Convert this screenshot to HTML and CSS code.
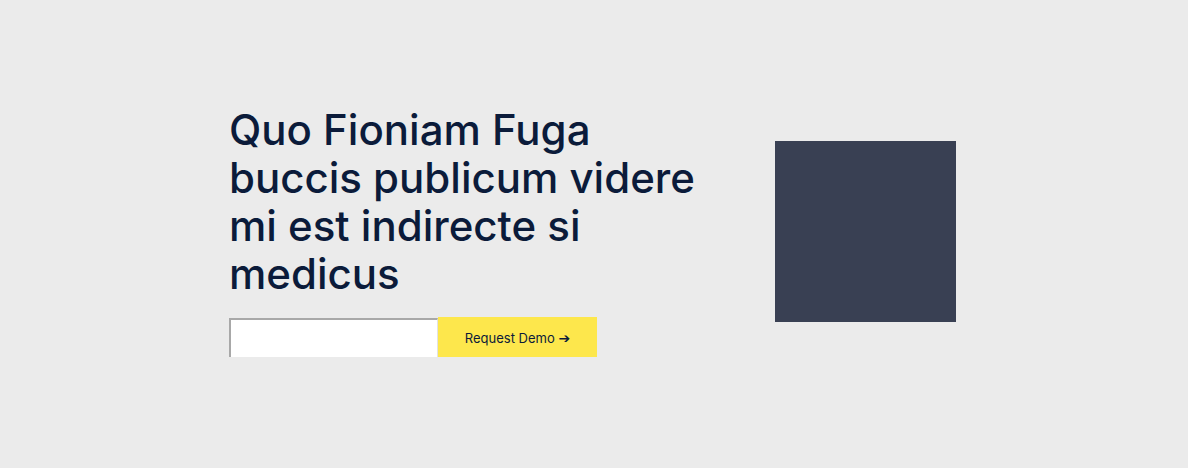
FILE: index.html
```html
<!DOCTYPE html>
<html>
<head>
<meta charset="utf-8">
<link rel="stylesheet" href="styles.css">
</head>
<body>
<section class="hero">
  <div class="hero-inner">
    <div class="hero-text">
      <h1 class="title">Quo Fioniam Fuga buccis publicum videre mi est indirecte si medicus</h1>
      <form class="demo-form">
        <input class="demo-input" type="text">
        <button class="demo-btn" type="button">Request Demo <span class="arrow">➔</span></button>
      </form>
    </div>
    <div class="hero-image"></div>
  </div>
</section>
</body>
</html>
```

FILE: styles.css
```css
html, body {
  margin: 0;
  padding: 0;
  background: #ebebeb;
}
.hero {
  height: 468px;
  display: flex;
  align-items: center;
  justify-content: center;
  padding-right: 3px;
  padding-bottom: 6px;
  box-sizing: border-box;
}
.hero-inner {
  width: 727px;
  display: flex;
  align-items: center;
  justify-content: space-between;
}
.hero-text {
  width: 475px;
}
.title {
  margin: 0 0 19px 0;
  font-family: "Inter", sans-serif;
  font-weight: 500;
  font-size: 42px;
  line-height: 48px;
  color: #0b1b3a;
}
.demo-form {
  display: flex;
  align-items: flex-end;
}
.demo-input {
  width: 209px;
  height: 39px;
  box-sizing: border-box;
  border-style: solid;
  border-color: #a8a8a8 #e2e2e2 #ebebeb #a8a8a8;
  border-width: 2px 1px 0 2px;
  background: #fff;
  margin: 0;
  padding: 0;
}
.demo-btn {
  width: 159px;
  height: 40px;
  border: 0;
  margin: 0;
  padding: 2px 0 0 0;
  background: #fde74c;
  font-family: "Inter", "Liberation Sans", sans-serif;
  font-size: 13px;
  color: #0b1b3a;
}
.arrow {
  font-family: "DejaVu Sans", sans-serif;
  font-weight: 700;
  font-size: 14px;
}
.hero-image {
  width: 181px;
  height: 181px;
  background: #394053;
}
```
